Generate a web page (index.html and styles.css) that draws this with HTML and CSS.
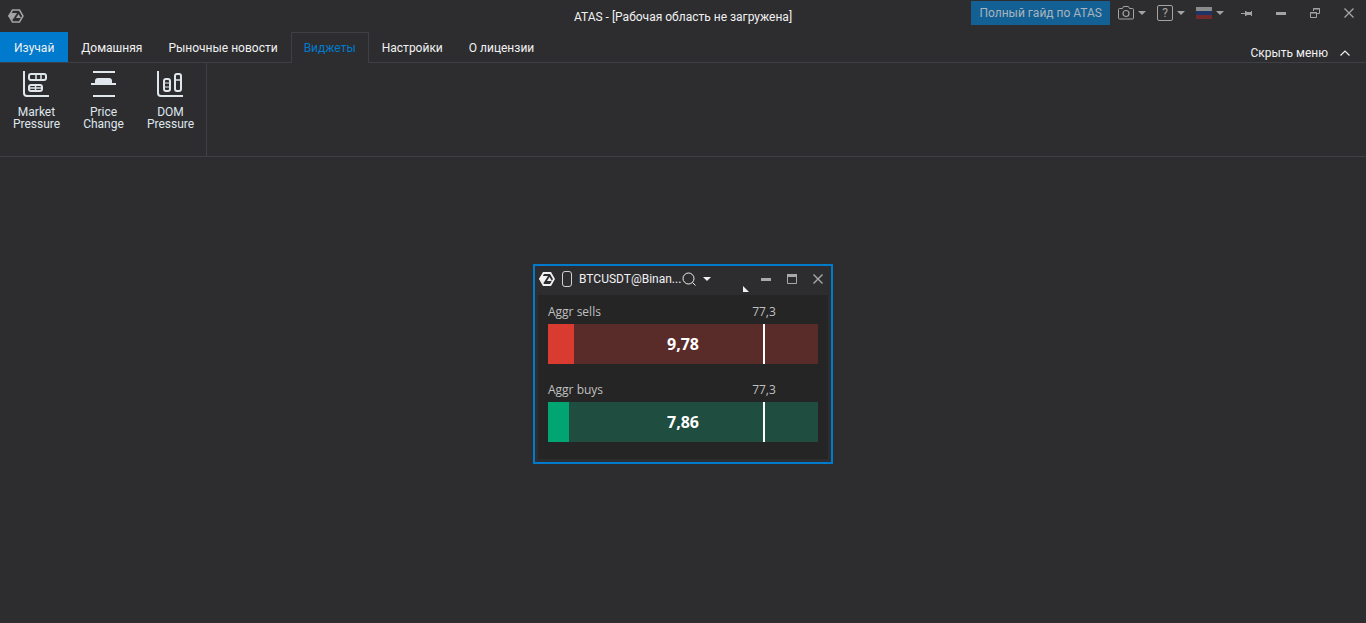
FILE: index.html
```html
<!DOCTYPE html>
<html lang="ru">
<head>
  <meta charset="UTF-8" />
  <meta name="viewport" content="width=device-width, initial-scale=1" />
  <title>ATAS</title>
  <link rel="stylesheet" href="styles.css">
</head>
<body>

  <header class="titlebar">
    <div class="titlebar-left">
      <svg class="logo" width="16" height="14" viewBox="0 0 16 14" aria-hidden="true">
        <path d="M4.500 1h7L15 7l-3.500 6h-7L1 7z" fill="none" stroke="currentColor" stroke-width="1.500"/>
        <path d="M0 7l2-3h7L4.500 11z" fill="currentColor"/>
        <path d="M10.500 5l2.500 4H8z" fill="currentColor"/>
      </svg>
    </div>
    <h1>ATAS - [Рабочая область не загружена]</h1>
    <div class="titlebar-right">
      <a href="#guide" class="guide">Полный гайд по ATAS</a>
      <button type="button" class="tool" aria-label="Снимок экрана">
        <svg width="16" height="16" viewBox="0 0 16 16"><path d="M1.500 3.500h3l1-2h5l1 2h3q1 0 1 1v8.500q0 1-1 1h-13q-1 0-1-1V4.500q0-1 1-1z" fill="none" stroke="currentColor"/><circle cx="8" cy="8.500" r="3" fill="none" stroke="currentColor" stroke-width="1.200"/></svg>
        <svg width="8" height="4" viewBox="0 0 8 4"><path d="M0 0h8L4 4z" fill="currentColor"/></svg>
      </button>
      <button type="button" class="tool" aria-label="Справка">
        <span class="help">?</span>
        <svg width="8" height="4" viewBox="0 0 8 4"><path d="M0 0h8L4 4z" fill="currentColor"/></svg>
      </button>
      <button type="button" class="tool" aria-label="Язык">
        <svg width="16" height="12" viewBox="0 0 16 12"><path d="M0 0h16v4H0z" fill="#8b8b8b"/><path d="M0 4h16v4H0z" fill="#1c3564"/><path d="M0 8h16v4H0z" fill="#752a2a"/></svg>
        <svg width="8" height="4" viewBox="0 0 8 4"><path d="M0 0h8L4 4z" fill="currentColor"/></svg>
      </button>
      <button type="button" class="pin" aria-label="Закрепить">
        <svg width="12" height="8" viewBox="0 0 12 8"><path d="M0 4.500h5" stroke="currentColor"/><path d="M4 2h1l1 1h4V2h1v5h-1V6H6L5 7H4z" fill="currentColor"/></svg>
      </button>
      <button type="button" class="win" aria-label="Свернуть">
        <svg width="10" height="10" viewBox="0 0 10 10"><path d="M0 4h10v3H0z" fill="currentColor"/></svg>
      </button>
      <button type="button" class="win" aria-label="Восстановить">
        <svg width="10" height="10" viewBox="0 0 10 10"><path d="M3.500 3V.5h6v5H7M3 1h7M.5 4.500h6v5h-6zM0 5h7" fill="none" stroke="currentColor"/></svg>
      </button>
      <button type="button" class="win" aria-label="Закрыть">
        <svg width="10" height="10" viewBox="0 0 10 10"><path d="M.5.5l9 9M9.500.5l-9 9" stroke="currentColor" stroke-width="1.400"/></svg>
      </button>
    </div>
  </header>

  <nav class="tabs">
    <a href="#learn" class="learn">Изучай</a>
    <a href="#home">Домашняя</a>
    <a href="#news">Рыночные новости</a>
    <a href="#widgets" class="active" aria-current="page">Виджеты</a>
    <a href="#settings">Настройки</a>
    <a href="#license">О лицензии</a>
    <button type="button" class="hide-menu">
      Скрыть меню
      <svg width="10" height="6" viewBox="0 0 10 6"><path d="M.5 5.500L5 1l4.500 4.500" fill="none" stroke="currentColor" stroke-width="1.200"/></svg>
    </button>
  </nav>

  <section class="ribbon">
    <div class="ribbon-group">
      <button type="button">
        <svg width="28" height="28" viewBox="0 0 28 28" fill="none" stroke="currentColor" stroke-width="2">
          <path d="M1 1v22q0 3 3 3h22"/>
          <rect x="6" y="4" width="17" height="6" rx="2"/><path d="M13 4v6M18 4v6" stroke-width="1.500"/>
          <rect x="6" y="15" width="13" height="6" rx="2"/><path d="M12.500 15v6M6 18h13" stroke-width="1.500"/>
        </svg>
        <span>Market Pressure</span>
      </button>
      <button type="button">
        <svg width="28" height="28" viewBox="0 0 28 28">
          <path d="M3 2h22M3 26h22M1 14h25" stroke="currentColor" stroke-width="2"/>
          <path d="M5 14v-3q0-3 3-3h11q3 0 3 3v3z" fill="currentColor"/>
        </svg>
        <span>Price Change</span>
      </button>
      <button type="button">
        <svg width="28" height="28" viewBox="0 0 28 28" fill="none" stroke="currentColor" stroke-width="2">
          <path d="M1 1v22q0 3 3 3h22"/>
          <rect x="7" y="9" width="6" height="12" rx="2"/><path d="M7 13h6M7 17h6" stroke-width="1.200"/>
          <rect x="18" y="4" width="6" height="17" rx="2"/><path d="M18 10h6" stroke-width="1.500"/>
        </svg>
        <span>DOM Pressure</span>
      </button>
    </div>
  </section>

  <main class="workspace">
    <section class="widget">
      <header class="widget-head">
        <svg class="logo" width="16" height="14" viewBox="0 0 16 14" aria-hidden="true">
          <path d="M4.500 1h7L15 7l-3.500 6h-7L1 7z" fill="none" stroke="currentColor" stroke-width="1.800"/>
          <path d="M0 7l2-3h7L4.500 11z" fill="currentColor"/>
          <path d="M10.500 5l2.500 4H8z" fill="currentColor"/>
        </svg>
        <span class="link-mark"></span>
        <h2>BTCUSDT@Binan...</h2>
        <button type="button" class="search" aria-label="Выбрать инструмент">
          <svg width="14" height="14" viewBox="0 0 14 14"><circle cx="6.500" cy="6.500" r="5.500" fill="none" stroke="currentColor"/><path d="M10.500 10.500l3 3" stroke="currentColor"/></svg>
          <svg width="8" height="4" viewBox="0 0 8 4"><path d="M0 0h8L4 4z" fill="currentColor"/></svg>
        </button>
        <svg class="corner" width="6" height="6" viewBox="0 0 6 6"><path d="M0 0v6h6z" fill="currentColor"/></svg>
        <div class="widget-buttons">
          <button type="button" aria-label="Свернуть">
            <svg width="10" height="10" viewBox="0 0 10 10"><path d="M0 4h10v3H0z" fill="currentColor"/></svg>
          </button>
          <button type="button" aria-label="Развернуть">
            <svg width="10" height="10" viewBox="0 0 10 10"><path d="M.5.5h9v9h-9z" fill="none" stroke="currentColor"/><path d="M0 0h10v3H0z" fill="currentColor"/></svg>
          </button>
          <button type="button" aria-label="Закрыть">
            <svg width="10" height="10" viewBox="0 0 10 10"><path d="M.5.5l9 9M9.500.5l-9 9" stroke="currentColor" stroke-width="1.400"/></svg>
          </button>
        </div>
      </header>
      <div class="widget-body">
        <div class="meter sells">
          <div class="meter-label"><span>Aggr sells</span><span class="limit">77,3</span></div>
          <div class="bar">
            <div class="fill" style="width: 9.78%"></div>
            <strong>9,78</strong>
            <div class="marker"></div>
          </div>
        </div>
        <div class="meter buys">
          <div class="meter-label"><span>Aggr buys</span><span class="limit">77,3</span></div>
          <div class="bar">
            <div class="fill" style="width: 7.86%"></div>
            <strong>7,86</strong>
            <div class="marker"></div>
          </div>
        </div>
      </div>
    </section>
  </main>

</body>
</html>
```
FILE: styles.css
```css
/* Reset & Base */
* { box-sizing: border-box; margin: 0; padding: 0; }
body {
  font-family: Roboto, "Noto Sans", sans-serif;
  font-size: 12px;
  line-height: 16px;
  background: #2d2d30;
  color: #f1f1f1;
  display: flex;
  flex-direction: column;
  min-height: 100vh;
}
a { color: inherit; text-decoration: none; }
button {
  font: inherit;
  color: inherit;
  background: none;
  border: none;
  cursor: pointer;
}
svg { display: block; flex-shrink: 0; }

/* Title bar */
.titlebar {
  display: grid;
  grid-template-columns: 1fr auto 1fr;
  height: 32px;
}
.titlebar-left {
  padding: 9px 8px;
  color: #a3a3a4;
}
.titlebar h1 {
  font-size: 12px;
  font-weight: 400;
  padding-top: 9px;
}
.titlebar-right {
  display: flex;
  justify-content: flex-end;
  align-items: center;
  height: 26px;
  padding-right: 12px;
  color: #a3a3a4;
}
.guide {
  background: #136095;
  color: #a9b4bb;
  height: 24px;
  line-height: 24px;
  padding: 0 8px;
  margin-right: 8px;
}
.tool {
  display: flex;
  align-items: center;
  gap: 4px;
  margin-right: 11px;
}
.help {
  width: 16px;
  height: 16px;
  border: 1px solid;
  border-radius: 2px;
  line-height: 14px;
}
.pin { margin: 0 23px 0 6px; }
.win { margin-right: 24px; }
.win:last-child { margin-right: 0; }

/* Tabs */
.tabs {
  display: flex;
  height: 31px;
  border-bottom: 1px solid #3f3f46;
}
.tabs a {
  padding: 8px 13px 0;
  height: 30px;
}
.tabs .learn {
  padding: 8px 14px 0;
  background: #007acc;
}
.tabs .active {
  height: 31px;
  padding: 7px 12px 0;
  background: #2d2d30;
  border: 1px solid #3f3f46;
  border-bottom: none;
  color: #007acc;
}
.hide-menu {
  display: flex;
  align-items: center;
  gap: 12px;
  margin-left: auto;
  padding: 12px 16px 0 0;
}

/* Ribbon */
.ribbon {
  display: flex;
  height: 94px;
  border-bottom: 1px solid #3f3f46;
}
.ribbon-group {
  display: flex;
  padding: 7px 2px 0 3px;
  border-right: 1px solid #3f3f46;
}
.ribbon-group button {
  display: flex;
  flex-direction: column;
  align-items: center;
  gap: 8px;
  width: 67px;
  line-height: 12px;
  color: #dfe6ec;
}
.ribbon-group span { width: min-content; }

/* Workspace */
.workspace {
  flex: 1;
  position: relative;
}
.widget {
  position: absolute;
  left: 533px;
  top: 107px;
  width: 300px;
  padding: 0 3px 3px;
  border: 2px solid #007acc;
  background: #2d2d30;
}
.widget-head {
  display: flex;
  align-items: center;
  height: 29px;
  padding: 0 5px 3px 1px;
}
.link-mark {
  width: 10px;
  height: 16px;
  margin: 0 7px;
  border: 1px solid #d0d0d0;
  border-radius: 3px;
}
.widget-head h2 {
  font-size: 12px;
  font-weight: 400;
}
.search {
  display: flex;
  align-items: center;
  gap: 7px;
  margin-left: 1px;
}
.corner {
  align-self: flex-end;
  margin-left: auto;
}
.widget-buttons {
  display: flex;
  gap: 16px;
  margin-left: 12px;
  color: #a9a9aa;
}
.widget-body {
  display: flex;
  flex-direction: column;
  gap: 18px;
  padding: 9px 10px 17px;
  background: #252526;
  font-family: "Open Sans", "Noto Sans", sans-serif;
}
.meter-label {
  position: relative;
  height: 20px;
  color: #c0c0c0;
}
.limit {
  position: absolute;
  left: 80%;
  transform: translateX(-50%);
}
.bar {
  position: relative;
  display: grid;
  place-items: center;
  height: 40px;
}
.bar strong {
  position: relative;
  font-size: 16px;
  color: #fff;
}
.fill {
  position: absolute;
  left: 0;
  top: 0;
  height: 100%;
}
.marker {
  position: absolute;
  left: 80%;
  top: 0;
  width: 2px;
  height: 100%;
  margin-left: -1px;
  background: #fff;
}
.sells .bar { background: #5a2c29; }
.sells .fill { background: #d93b31; }
.buys .bar { background: #1f4d3f; }
.buys .fill { background: #00a572; }
```
